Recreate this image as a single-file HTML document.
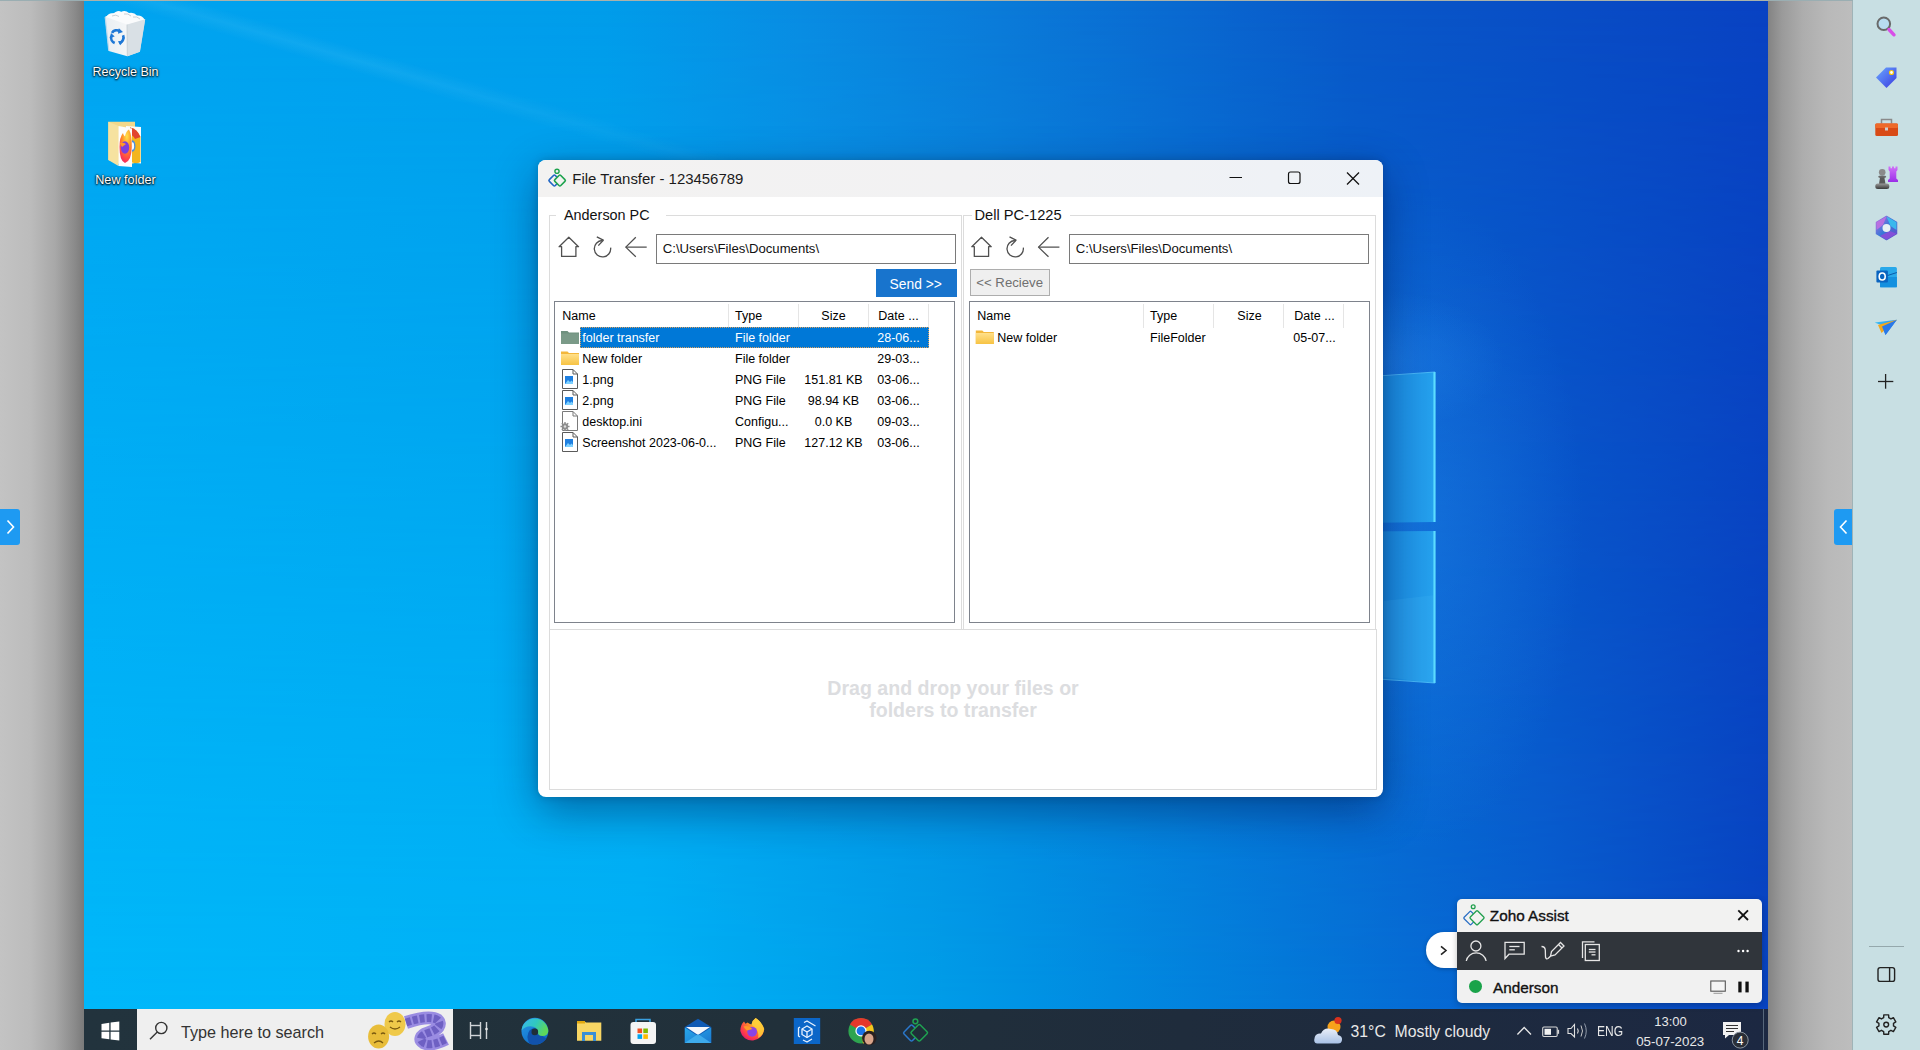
<!DOCTYPE html>
<html><head><meta charset="utf-8">
<style>
*{box-sizing:border-box;margin:0;padding:0}
html,body{width:1920px;height:1050px;overflow:hidden;background:#c0c0c0;font-family:"Liberation Sans",sans-serif}
.a{position:absolute}
.t{position:absolute;white-space:nowrap;line-height:1}
svg{position:absolute;overflow:visible}
#lgray{left:0;top:0;width:84px;height:1050px;background:linear-gradient(90deg,#c3c3c3 0px,#bcbcbc 30px,#a8a8a8 55px,#8a8a8a 75px,#7a7a7a 84px)}
#rgray{left:1768px;top:0;width:85px;height:1050px;background:linear-gradient(90deg,#838383 0px,#9a9a9a 14px,#adadad 35px,#b9b9b9 60px,#bdbdbd 84px)}
#sidebar{left:1852px;top:0;width:68px;height:1050px;background:#c8dfe3;border-left:1px solid #9fb3b7}
#topline{left:0;top:0;width:1853px;height:1px;background:linear-gradient(90deg,#9aaeb2 0px,#9aaeb2 84px,#aab2aa 84px,#aab2aa 1768px,#9aaeb2 1768px)}
#desk{left:84px;top:1px;width:1684px;height:1008px;overflow:hidden;background:linear-gradient(90deg,#00b8fa 0px,#00b2f6 560px,#009ce8 860px,#047ada 1200px,#0860d0 1450px,#0844c2 1684px)}
#desktop2{left:0;top:0;width:1684px;height:1008px;background:linear-gradient(90deg,#00a4f0 0px,#009cea 520px,#088ce2 716px,#0a7ad8 916px,#0858c8 1266px,#0842c2 1684px);-webkit-mask-image:linear-gradient(to bottom,#000 0px,rgba(0,0,0,0) 1008px)}
#taskbar{left:84px;top:1009px;width:1684px;height:41px;background:linear-gradient(90deg,#22333d 0px,#21303a 700px,#1f2c3c 1100px,#1c2842 1684px)}
#ltab{left:0;top:509px;width:20px;height:36px;background:#1e9af2;border-radius:0 3px 3px 0}
#rtab{left:1834px;top:509px;width:18px;height:36px;background:#1e9af2;border-radius:3px 0 0 3px}
#win{left:538px;top:160px;width:845px;height:637px;background:#fff;border-radius:8px;box-shadow:0 14px 44px rgba(0,20,70,.45),0 0 8px rgba(0,0,0,.18);overflow:hidden}
#title{left:0;top:0;width:845px;height:37px;background:linear-gradient(90deg,#f3f2f1 0%,#f2f2f3 50%,#eef2f7 100%)}
.gb{position:absolute;border:1px solid #dcdcdc}
.lb{position:absolute;border:1px solid #7e838c;background:#fff}
.lt{position:absolute;white-space:nowrap;line-height:1;font-size:12.5px;color:#000}
.ico{stroke:#444;fill:none;stroke-width:1.4}
.desklabel{position:absolute;white-space:nowrap;line-height:1;font-size:13px;color:#fff;text-shadow:0 0 1.5px rgba(0,0,0,.9),0 1px 2px #000,0 0 3px rgba(0,0,0,.5);text-align:center}
</style></head><body>
<div id="lgray" class="a"></div>
<div id="desk" class="a"><div id="desktop2" class="a"></div>
<!-- light streaks -->
<div class="a" style="left:0;top:0;width:1684px;height:1008px;background:linear-gradient(16deg,rgba(255,255,255,0) 975px,rgba(170,235,255,.09) 987px,rgba(255,255,255,0) 999px);-webkit-mask-image:linear-gradient(90deg,#000 0px,#000 300px,rgba(0,0,0,0) 760px)"></div>
<!-- window logo (visible part right of window) -->
<svg style="left:0;top:0" width="1684" height="1008">
 <defs>
  <linearGradient id="wl" x1="0" y1="0" x2="1" y2="0"><stop offset="0" stop-color="#1478d8"/><stop offset=".7" stop-color="#1a8ce2"/><stop offset="1" stop-color="#26a2ee"/></linearGradient>
  <radialGradient id="glow" cx="0.5" cy="0.5" r="0.5"><stop offset="0" stop-color="#2a8ef0" stop-opacity=".35"/><stop offset="1" stop-color="#2a8ef0" stop-opacity="0"/></radialGradient>
 </defs>
 <ellipse cx="1330" cy="520" rx="170" ry="330" fill="url(#glow)"/>
 <ellipse cx="1300" cy="360" rx="120" ry="70" fill="url(#glow)"/>
 <polygon points="1200,384 1351,371 1351,521 1200,523" fill="url(#wl)"/>
 <polygon points="1200,531 1351,530 1351,682 1200,670" fill="url(#wl)"/>
 <line x1="1350.5" y1="371" x2="1350.5" y2="521" stroke="#5cdcff" stroke-width="2.2"/>
 <line x1="1350.5" y1="530" x2="1350.5" y2="682" stroke="#5cdcff" stroke-width="2.2"/>
 <line x1="1280" y1="376" x2="1351" y2="371" stroke="#5ccfff" stroke-width="1.2" opacity=".7"/>
 <line x1="1280" y1="677" x2="1351" y2="682" stroke="#5ccfff" stroke-width="1.2" opacity=".7"/>
 <polygon points="1300,600 1351,594 1351,682 1300,676" fill="#5ad0ff" opacity=".12"/>
</svg>
<!-- recycle bin -->
<svg style="left:16px;top:4px" width="60" height="60" viewBox="0 0 60 60">
 <defs><linearGradient id="bin" x1="0" y1="0" x2="1" y2="0"><stop offset="0" stop-color="#e8eef2"/><stop offset=".55" stop-color="#f4f6f8"/><stop offset="1" stop-color="#c9d3d9"/></linearGradient></defs>
 <polygon points="5,11.7 18.6,6 45.2,14.3 39.9,46.7 27.3,51.3 8.7,45.9" fill="url(#bin)"/>
 <polygon points="27,19 45.2,14.3 39.9,46.7 27.3,51.3" fill="#d9e0e5"/>
 <path d="M6,12 Q9,7 14,8.5 Q17,5 21,7 Q25,4.5 29,8 Q34,7 37,10.5 Q42,10 44.5,14.5 L27,19.5 Z" fill="#fafbfc"/>
 <path d="M12,11 Q16,9 19,11.5 M24,9 Q28,8 31,11 M33,12 Q37,11 40,14" stroke="#c8d0d6" stroke-width="1" fill="none"/>
 <line x1="5.2" y1="12" x2="8.8" y2="45.8" stroke="#b8d8ec" stroke-width="1.2"/>
 <line x1="27" y1="19.5" x2="27.3" y2="51" stroke="#c2ccd2" stroke-width=".8"/>
 <g stroke="#1f78d6" stroke-width="2.9" fill="none" transform="translate(17 32.5) scale(.92) translate(-17 -32.5)">
 <path d="M11.5,27.5 A6.3,6.3 0 0 1 20,25.5"/>
 <path d="M23.6,30 A6.3,6.3 0 0 1 19.5,38.5"/>
 <path d="M14.5,38.5 A6.3,6.3 0 0 1 10.8,31"/>
 </g>
 <g fill="#1f78d6" transform="translate(17 32.5) scale(.92) translate(-17 -32.5)"><polygon points="19,22.5 23.5,26.5 18,28.5"/><polygon points="24.5,36 20.5,41 18,36.5"/><polygon points="9,33 10.5,27.5 14.5,31.5"/></g>
</svg>
<div class="desklabel" style="left:8.5px;top:65.2px;width:66px;font-size:12.5px">Recycle Bin</div>
<!-- new folder -->
<svg style="left:16px;top:112px" width="60" height="60" viewBox="0 0 60 60">
 <defs><radialGradient id="nff" cx=".6" cy=".2" r=".9"><stop offset="0" stop-color="#ffe14a"/><stop offset=".45" stop-color="#ff8a24"/><stop offset=".8" stop-color="#ff3b4e"/><stop offset="1" stop-color="#e0206a"/></radialGradient></defs>
 <polygon points="8.3,8.7 35,8.7 35,50 24,52.8 8.3,47" fill="#f3d88a"/>
 <polygon points="26,13 41,14 41,50.5 26,49" fill="#fbfbfb"/>
 <path d="M30,14.5 A14,18 0 0 1 40.5,24 L40.5,49 A12,16 0 0 1 30,48 Z" fill="#f3b51e"/>
 <path d="M30,14.5 A14,18 0 0 1 40.5,24 L35,26 Q33,22 30,21.5 Z" fill="#e2432f"/>
 <ellipse cx="32.5" cy="33" rx="3" ry="5.8" fill="#4b8fdc"/>
 <ellipse cx="32.5" cy="33" rx="1.6" ry="3.8" fill="#fbfbfb"/>
 <polygon points="8.3,8.7 18.5,13 18.5,53 8.3,47" fill="#f6e2a0"/>
 <polygon points="18.5,13 32,15.5 32,54 18.5,53" fill="#fdfdfd"/>
 <path d="M19.5,34 Q19.5,24 23,20 Q23.5,23 25,23.5 Q26,18 29,16.5 Q32,22 31.8,34 Q31.5,48 25,50 Q19.5,48 19.5,34 Z" fill="url(#nff)"/>
 <ellipse cx="25" cy="34.5" rx="4.2" ry="6.2" fill="#7b3fdc"/>
 <path d="M19.8,30 Q23,29 26,31 L22,34 Z" fill="#ff9a28"/>
</svg>
<div class="desklabel" style="left:8.5px;top:173.4px;width:66px;font-size:12.7px">New folder</div>
</div>
<div id="rgray" class="a"></div>
<div id="sidebar" class="a"></div>
<div id="topline" class="a"></div>
<div id="ltab" class="a"><svg style="left:6px;top:10px" width="9" height="16"><polyline points="1.5,1.5 7.5,8 1.5,14.5" stroke="#fff" stroke-width="1.6" fill="none"/></svg></div>
<div id="rtab" class="a"><svg style="left:5px;top:10px" width="9" height="16"><polyline points="7.5,1.5 1.5,8 7.5,14.5" stroke="#fff" stroke-width="1.6" fill="none"/></svg></div>
<div id="win" class="a">
 <div id="title" class="a"></div>
 <div class="t" style="left:34.3px;top:12.1px;font-size:14.95px;color:#1b1b1b">File Transfer - 123456789</div>
 <!-- group boxes -->
 <div class="gb" style="left:11px;top:55px;width:413px;height:415px"></div>
 <div class="gb" style="left:425px;top:55px;width:413px;height:415px"></div>
 <div class="a" style="left:18px;top:50px;width:110px;height:12px;background:#fff"></div>
 <div class="a" style="left:434px;top:50px;width:98px;height:12px;background:#fff"></div>
 <div class="t" style="left:26px;top:47.6px;font-size:14.4px;color:#111">Anderson PC</div>
 <div class="t" style="left:436.5px;top:47.6px;font-size:14.65px;color:#111">Dell PC-1225</div>
 <!-- address boxes -->
 <div class="a" style="left:118px;top:74px;width:300px;height:30px;border:1px solid #7a7a7a;background:#fff"></div>
 <div class="t" style="left:124.8px;top:82px;font-size:13.15px;color:#111">C:\Users\Files\Documents\</div>
 <div class="a" style="left:531px;top:74px;width:300px;height:30px;border:1px solid #7a7a7a;background:#fff"></div>
 <div class="t" style="left:537.8px;top:82px;font-size:13.15px;color:#111">C:\Users\Files\Documents\</div>
 <!-- buttons -->
 <div class="a" style="left:338px;top:109px;width:81px;height:28px;background:#1874cd"></div>
 <div class="t" style="left:351.6px;top:117.6px;font-size:13.8px;color:#fff">Send &gt;&gt;</div>
 <div class="a" style="left:432px;top:109px;width:80px;height:27px;background:#efefef;border:1px solid #adadad"></div>
 <div class="t" style="left:438.3px;top:115.8px;font-size:13.2px;color:#707070">&lt;&lt; Recieve</div>
 <!-- list boxes -->
 <div class="lb" style="left:16px;top:141px;width:401px;height:322px">
  <div class="a" style="left:173px;top:2px;width:1px;height:24px;background:#e5e5e5"></div>
  <div class="a" style="left:243px;top:2px;width:1px;height:24px;background:#e5e5e5"></div>
  <div class="a" style="left:313px;top:2px;width:1px;height:24px;background:#e5e5e5"></div>
  <div class="a" style="left:373px;top:2px;width:1px;height:24px;background:#e5e5e5"></div>
  <div class="lt" style="left:7.3px;top:7.8px">Name</div>
  <div class="lt" style="left:180px;top:7.8px">Type</div>
  <div class="lt" style="left:243.5px;top:7.8px;width:70px;text-align:center">Size</div>
  <div class="lt" style="left:313.5px;top:7.8px;width:60px;text-align:center">Date ...</div>
  <div class="a" style="left:25px;top:25px;width:349px;height:21px;background:#0078d7;border:1px dotted #d9a060"></div>
  <div class="lt" style="left:27.3px;top:29.5px;color:#fff">folder transfer</div>
  <div class="lt" style="left:180px;top:29.5px;color:#fff">File folder</div>
  <div class="lt" style="left:313.5px;top:29.5px;width:60px;text-align:center;color:#fff">28-06...</div>
  <div class="lt" style="left:27.3px;top:50.5px">New folder</div>
  <div class="lt" style="left:180px;top:50.5px">File folder</div>
  <div class="lt" style="left:313.5px;top:50.5px;width:60px;text-align:center">29-03...</div>
  <div class="lt" style="left:27.3px;top:71.5px">1.png</div>
  <div class="lt" style="left:180px;top:71.5px">PNG File</div>
  <div class="lt" style="left:243.5px;top:71.5px;width:70px;text-align:center">151.81 KB</div>
  <div class="lt" style="left:313.5px;top:71.5px;width:60px;text-align:center">03-06...</div>
  <div class="lt" style="left:27.3px;top:92.5px">2.png</div>
  <div class="lt" style="left:180px;top:92.5px">PNG File</div>
  <div class="lt" style="left:243.5px;top:92.5px;width:70px;text-align:center">98.94 KB</div>
  <div class="lt" style="left:313.5px;top:92.5px;width:60px;text-align:center">03-06...</div>
  <div class="lt" style="left:27.3px;top:113.5px">desktop.ini</div>
  <div class="lt" style="left:180px;top:113.5px">Configu...</div>
  <div class="lt" style="left:243.5px;top:113.5px;width:70px;text-align:center">0.0 KB</div>
  <div class="lt" style="left:313.5px;top:113.5px;width:60px;text-align:center">09-03...</div>
  <div class="lt" style="left:27.3px;top:134.5px">Screenshot 2023-06-0...</div>
  <div class="lt" style="left:180px;top:134.5px">PNG File</div>
  <div class="lt" style="left:243.5px;top:134.5px;width:70px;text-align:center">127.12 KB</div>
  <div class="lt" style="left:313.5px;top:134.5px;width:60px;text-align:center">03-06...</div>
 </div>
 <div class="lb" style="left:431px;top:141px;width:401px;height:322px">
  <div class="a" style="left:173px;top:2px;width:1px;height:24px;background:#e5e5e5"></div>
  <div class="a" style="left:243px;top:2px;width:1px;height:24px;background:#e5e5e5"></div>
  <div class="a" style="left:313px;top:2px;width:1px;height:24px;background:#e5e5e5"></div>
  <div class="a" style="left:373px;top:2px;width:1px;height:24px;background:#e5e5e5"></div>
  <div class="lt" style="left:7.3px;top:7.8px">Name</div>
  <div class="lt" style="left:180px;top:7.8px">Type</div>
  <div class="lt" style="left:244.5px;top:7.8px;width:70px;text-align:center">Size</div>
  <div class="lt" style="left:314.5px;top:7.8px;width:60px;text-align:center">Date ...</div>
  <div class="lt" style="left:27.3px;top:29.5px">New folder</div>
  <div class="lt" style="left:180px;top:29.5px">FileFolder</div>
  <div class="lt" style="left:314.5px;top:29.5px;width:60px;text-align:center">05-07...</div>
 </div>
 <!-- drop area -->
 <div class="a" style="left:11px;top:469px;width:828px;height:161px;border:1px solid #dcdcdc"></div>
 <div class="t" style="left:215px;top:519.0px;width:400px;text-align:center;font-size:19.6px;font-weight:700;color:#dcdde0">Drag and drop your files or</div>
 <div class="t" style="left:215px;top:540.9px;width:400px;text-align:center;font-size:19.6px;font-weight:700;color:#dcdde0">folders to transfer</div>
 <!-- line icons -->
 <svg style="left:0;top:0" width="845" height="637" viewBox="538 160 845 637">
  <defs>
   <linearGradient id="fy" x1="0" y1="0" x2="0" y2="1"><stop offset="0" stop-color="#ffe08a"/><stop offset="1" stop-color="#f7c343"/></linearGradient>
  </defs>
  <!-- zoho logo -->
  <g fill="none" stroke-width="1.6">
   <rect x="550.2" y="176.3" width="8.4" height="8.4" rx="1.3" transform="rotate(45 554.4 180.5)" stroke="#2166c4"/>
   <rect x="555.7" y="176.3" width="8.4" height="8.4" rx="1.3" transform="rotate(45 559.9 180.5)" stroke="#1ea34e" fill="#f3f2f1"/>
   <circle cx="557" cy="171.3" r="2.1" stroke="#1ea34e" stroke-width="1.4"/>
  </g>
  <!-- window controls -->
  <g stroke="#111" stroke-width="1.2" fill="none">
   <line x1="1229.5" y1="177.5" x2="1242" y2="177.5"/>
   <rect x="1288.5" y="172" width="11.5" height="11.5" rx="2"/>
   <line x1="1347" y1="172.5" x2="1359" y2="184.5"/>
   <line x1="1359" y1="172.5" x2="1347" y2="184.5"/>
  </g>
  <!-- toolbar icons left -->
  <g stroke="#505050" stroke-width="1.3" fill="none" stroke-linejoin="round">
   <path d="M561.6,256.4 L561.6,246.7 L559.1,246.7 L568.8,237.2 L578.5,246.7 L575.9,246.7 L575.9,256.4 Z"/>
   <path d="M602.21,240.50 A8.2,8.2 0 1 0 610.62,247.56"/>
   <polyline points="596.8,236.8 603.3,240.2 598.3,245.6"/>
   <polyline points="635.8,237.2 625.8,247.1 635.8,256.8"/>
   <line x1="625.8" y1="247.1" x2="646.7" y2="247.1"/>
  </g>
  <g stroke="#505050" stroke-width="1.3" fill="none" stroke-linejoin="round" transform="translate(412.7,0)">
   <path d="M561.6,256.4 L561.6,246.7 L559.1,246.7 L568.8,237.2 L578.5,246.7 L575.9,246.7 L575.9,256.4 Z"/>
   <path d="M602.21,240.50 A8.2,8.2 0 1 0 610.62,247.56"/>
   <polyline points="596.8,236.8 603.3,240.2 598.3,245.6"/>
   <polyline points="635.8,237.2 625.8,247.1 635.8,256.8"/>
   <line x1="625.8" y1="247.1" x2="646.7" y2="247.1"/>
  </g>
  <!-- file icons -->
  <g id="fold-sel">
   <path d="M561,331 L567.5,331 L569,332.5 L579,332.5 L579,344 L561,344 Z" fill="#6f917f"/>
   <rect x="561" y="333.5" width="18" height="10.5" fill="#7a9a88"/>
  </g>
  <g>
   <path d="M561,351.5 L567.5,351.5 L569,353 L579,353 L579,365 L561,365 Z" fill="#f3b73b"/>
   <rect x="561" y="354" width="18" height="11" fill="url(#fy)"/>
  </g>
  <g transform="translate(414.8,-21)">
   <path d="M561,351.5 L567.5,351.5 L569,353 L579,353 L579,365 L561,365 Z" fill="#f3b73b"/>
   <rect x="561" y="354" width="18" height="11" fill="url(#fy)"/>
  </g>
  <g id="png1">
   <path d="M562.5,369.5 L573,369.5 L577.5,374 L577.5,388.5 L562.5,388.5 Z" fill="#fff" stroke="#5a5a5a" stroke-width="1"/>
   <polyline points="573,369.5 573,374 577.5,374" fill="none" stroke="#5a5a5a" stroke-width="1"/>
   <rect x="565" y="376" width="8" height="8" fill="#1e7fe0"/>
   <path d="M565,384 L568,380 L570,382 L571.5,380.5 L573,382 L573,384 Z" fill="#7cd0ff"/>
  </g>
  <use href="#png1" transform="translate(0,21)"/>
  <g>
   <path d="M562.5,411.5 L573,411.5 L577.5,416 L577.5,430.5 L562.5,430.5 Z" fill="#fff" stroke="#7a7a7a" stroke-width="1"/>
   <polyline points="573,411.5 573,416 577.5,416" fill="none" stroke="#7a7a7a" stroke-width="1"/>
   <path d="M568.00,425.38 L568.13,425.83 L569.54,425.78 L569.54,427.22 L568.13,427.17 L567.91,427.83 L567.68,428.24 L568.72,429.20 L567.70,430.22 L566.74,429.18 L566.12,429.50 L565.67,429.63 L565.72,431.04 L564.28,431.04 L564.33,429.63 L563.67,429.41 L563.26,429.18 L562.30,430.22 L561.28,429.20 L562.32,428.24 L562.00,427.62 L561.87,427.17 L560.46,427.22 L560.46,425.78 L561.87,425.83 L562.09,425.17 L562.32,424.76 L561.28,423.80 L562.30,422.78 L563.26,423.82 L563.88,423.50 L564.33,423.37 L564.28,421.96 L565.72,421.96 L565.67,423.37 L566.33,423.59 L566.74,423.82 L567.70,422.78 L568.72,423.80 L567.68,424.76 Z" fill="#8d8d8d"/>
   <circle cx="565" cy="426.5" r="1.2" fill="#ddd"/>
  </g>
  <use href="#png1" transform="translate(0,63)"/>
 </svg>
</div>
<div id="taskbar" class="a">
 <div class="a" style="left:53px;top:0;width:316px;height:41px;background:#efefef"></div>
 <div class="t" style="left:97px;top:14.6px;font-size:16.2px;color:#333">Type here to search</div>
 <div class="t" style="left:1266.5px;top:14.6px;font-size:15.8px;color:#e8e8e8">31°C&nbsp; Mostly cloudy</div>
 <div class="t" style="left:1513.3px;top:15.3px;font-size:14.4px;color:#e8e8e8;transform:scaleX(.835);transform-origin:0 0">ENG</div>
 <div class="t" style="left:1570.2px;top:6.4px;font-size:13px;color:#e8e8e8">13:00</div>
 <div class="t" style="left:1552.2px;top:25.8px;font-size:13.3px;color:#e8e8e8">05-07-2023</div>
 <div class="a" style="left:1679px;top:0;width:1px;height:41px;background:#56667a"></div>
 <svg style="left:0;top:0" width="1684" height="41" viewBox="84 1009 1684 41">
  <defs>
   <linearGradient id="edgeg" x1="0" y1="0" x2=".6" y2="1"><stop offset="0" stop-color="#2a9ae6"/><stop offset="1" stop-color="#0c6cc8"/></linearGradient>
   <linearGradient id="edgeg2" x1="0" y1="0" x2="1" y2=".4"><stop offset="0" stop-color="#3ab8ee"/><stop offset=".55" stop-color="#30c8c0"/><stop offset="1" stop-color="#5ed85a"/></linearGradient>
   <linearGradient id="mailg" x1="0" y1="0" x2="1" y2="1"><stop offset="0" stop-color="#28a8ea"/><stop offset="1" stop-color="#1a78d0"/></linearGradient>
   <radialGradient id="ffg" cx=".75" cy=".15" r=".95"><stop offset="0" stop-color="#ffe04a"/><stop offset=".45" stop-color="#ff8a2a"/><stop offset=".8" stop-color="#ff3c4a"/><stop offset="1" stop-color="#e81a6a"/></radialGradient>
   <linearGradient id="cloudg" x1="0" y1="0" x2="0" y2="1"><stop offset="0" stop-color="#e9eef8"/><stop offset="1" stop-color="#a9c2e6"/></linearGradient>
  </defs>
  <!-- start -->
  <g fill="#fff">
   <polygon points="101.5,1024 109.3,1022.8 109.3,1030.5 101.5,1030.5"/>
   <polygon points="110.6,1022.6 119.3,1021.4 119.3,1030.5 110.6,1030.5"/>
   <polygon points="101.5,1031.8 109.3,1031.8 109.3,1039.3 101.5,1038.3"/>
   <polygon points="110.6,1031.8 119.3,1031.8 119.3,1040.6 110.6,1039.5"/>
  </g>
  <!-- search glass -->
  <g stroke="#333" stroke-width="1.4" fill="none">
   <circle cx="161.3" cy="1028" r="5.6"/>
   <line x1="157.3" y1="1032" x2="150" y2="1039.3"/>
  </g>
  <!-- masks + film -->
  <path d="M406,1022.5 C420,1018 432,1016.5 437.5,1020 C442,1024 438,1030 428,1033 C420,1035.5 419,1040 424,1043 C430,1046 438,1043 446,1039" stroke="#9a8ce2" stroke-width="13" fill="none"/>
  <path d="M406,1022.5 C420,1018 432,1016.5 437.5,1020 C442,1024 438,1030 428,1033 C420,1035.5 419,1040 424,1043 C430,1046 438,1043 446,1039" stroke="#5f52b8" stroke-width="8" stroke-dasharray="5 2" fill="none" opacity=".75"/>
  <ellipse cx="395" cy="1024" rx="10.5" ry="12" fill="#efc94a"/>
  <ellipse cx="378.6" cy="1036.5" rx="10.5" ry="12" fill="#e8bd3a"/>
  <g stroke="#7a5a10" stroke-width="1.3" fill="none">
   <path d="M389,1022 q2,-2 4,0"/><path d="M397,1022 q2,-2 4,0"/><path d="M390,1027 q5,4 10,0"/>
   <path d="M372,1034 q2,-2 4,0"/><path d="M381,1034 q2,-2 4,0"/><path d="M374,1043 q5,-4 9,0"/>
  </g>
  <!-- task view -->
  <g stroke="#d0d4d8" stroke-width="1.4" fill="none">
   <line x1="470.5" y1="1022" x2="470.5" y2="1039"/><line x1="480.5" y1="1022" x2="480.5" y2="1039"/>
   <line x1="470" y1="1025.5" x2="481" y2="1025.5"/><line x1="470" y1="1035.5" x2="481" y2="1035.5"/>
   <line x1="486.5" y1="1022" x2="486.5" y2="1039"/>
   <circle cx="486.5" cy="1029" r="1.3" fill="#e8e8e8" stroke="none"/>
  </g>
  <!-- edge -->
  <circle cx="534.9" cy="1031.2" r="13.4" fill="url(#edgeg)"/>
  <path d="M529.5,1044 Q525.5,1036 529.5,1030.5 Q534,1026.5 538.5,1030 Q540,1035.5 546.5,1038.5 Q542,1044.3 535,1044.6 Z" fill="#1152ac"/>
  <path d="M521.6,1030.5 A13.4,13.4 0 0 1 548.3,1031 Q548,1036 542.5,1036 Q537.5,1036 538,1032 Q537,1026.5 530.5,1026.3 Q524.5,1026.5 521.6,1030.5 Z" fill="url(#edgeg2)"/>
  <circle cx="534.8" cy="1031.9" r="3.3" fill="#1f2f38"/>
  <!-- explorer -->
  <path d="M577,1021 L584,1021 L586,1022.5 L601.3,1022.5 L601.3,1040.7 L577,1040.7 Z" fill="#f8d664"/>
  <rect x="577" y="1021" width="8" height="2.5" fill="#e1a80f"/>
  <path d="M582,1041 L582,1032 L596,1032 L596,1041 L593,1041 L593,1035 L585,1035 L585,1041 Z" fill="#3a8fd6"/>
  <!-- store -->
  <path d="M636,1022 L636,1019.5 L650,1019.5 L650,1022" stroke="#3aa0e0" stroke-width="1.5" fill="none"/>
  <rect x="630.5" y="1022" width="25.5" height="22" rx="3" fill="#f4f4f4"/>
  <rect x="637.5" y="1028.5" width="4.6" height="4.6" fill="#f25022"/><rect x="643.3" y="1028.5" width="4.6" height="4.6" fill="#7fba00"/>
  <rect x="637.5" y="1034.3" width="4.6" height="4.6" fill="#00a4ef"/><rect x="643.3" y="1034.3" width="4.6" height="4.6" fill="#ffb900"/>
  <!-- mail -->
  <polygon points="684.8,1027 698,1018.8 711.2,1027 711.2,1043 684.8,1043" fill="#0f5bb5"/>
  <polygon points="686,1027 710,1027 698,1035" fill="#f4f8fc"/>
  <polygon points="684.8,1027.5 698,1036 711.2,1027.5 711.2,1043 684.8,1043" fill="url(#mailg)"/>
  <polygon points="684.8,1043 698,1034 711.2,1043" fill="#46b4f0" opacity=".8"/>
  <!-- firefox -->
  <path d="M740.3,1031 Q740.5,1024.5 744,1021.6 L745.5,1023.8 L747.5,1022.5 Q749.5,1024 751.5,1024.5 Q752.5,1020 755.7,1018 Q761.5,1021.5 764.2,1029 A12.1,12.1 0 0 1 740.3,1031 Z" fill="url(#ffg)"/>
  <path d="M751.5,1024.5 Q752.5,1020 755.7,1018 Q761.5,1021.5 764.2,1029 Q763,1036 758,1038 Q760,1030 751.5,1024.5 Z" fill="#ffcf38" opacity=".85"/>
  <circle cx="752.1" cy="1031.8" r="4.9" fill="#8a44e6"/>
  <path d="M743.5,1026.5 Q748.5,1025 752.5,1029 L747,1030.5 Q745,1029 743.5,1026.5 Z" fill="#ff9a2a"/>
  <!-- blue cube app -->
  <rect x="793.8" y="1018" width="26.4" height="26" fill="#0b66c8"/>
  <g stroke="#e8f2ff" stroke-width="1.3" fill="none" stroke-linejoin="round">
   <path d="M807,1026 L812,1029 L812,1034.5 L807,1037.5 L802,1034.5 L802,1029 Z"/>
   <path d="M802,1029 L807,1032 L812,1029 M807,1032 L807,1037.5"/>
   <path d="M800,1027 L798.5,1028 L798.5,1036 L800,1037"/>
   <path d="M804,1022.5 L807,1021 L815.5,1026"/>
   <path d="M803,1040 L807,1042 L812,1039"/>
  </g>
  <!-- chrome -->
  <circle cx="861" cy="1030.9" r="12.6" fill="#2ea44f"/>
  <path d="M861,1030.9 L850,1024.5 A12.6,12.6 0 0 1 872,1024.5 Z" fill="#e6382b"/>
  <path d="M861,1030.9 L872,1024.5 A12.6,12.6 0 0 1 863,1043.4 Z" fill="#f7c51c"/>
  <circle cx="861" cy="1030.9" r="5.6" fill="#fff"/>
  <circle cx="861" cy="1030.9" r="4.4" fill="#1a73e8"/>
  <circle cx="869.3" cy="1038" r="7.3" fill="#2a2020"/>
  <ellipse cx="869" cy="1039" rx="4.5" ry="5.5" fill="#d9a48a"/>
  <!-- zoho -->
  <g fill="none" stroke-width="1.5">
   <rect x="905.5" y="1027" width="12" height="12" rx="1.5" transform="rotate(45 911.5 1033)" stroke="#2a78cc"/>
   <rect x="913" y="1026.5" width="12.5" height="12.5" rx="1.5" transform="rotate(45 919.25 1032.75)" stroke="#1fa352" fill="#1f2e38"/>
   <circle cx="915.4" cy="1021.3" r="2.4" stroke="#1fa352"/>
  </g>
  <!-- weather -->
  <circle cx="1334" cy="1027" r="6.5" fill="#f7a21b"/>
  <circle cx="1338" cy="1020.5" r="3.6" fill="#d8321e"/>
  <path d="M1317,1043.5 Q1313,1043 1314.8,1037 Q1316,1033 1321,1033.5 Q1324,1027 1331,1029 Q1337,1029 1338,1035 Q1342.5,1036 1342,1040 Q1341.5,1043.5 1338,1043.5 Z" fill="url(#cloudg)"/>
  <!-- tray -->
  <polyline points="1517.4,1034.5 1524.2,1027.5 1531,1034.5" stroke="#e8e8e8" stroke-width="1.3" fill="none"/>
  <rect x="1542.7" y="1027" width="14.5" height="9.5" rx="1.2" stroke="#d8d8d8" stroke-width="1.1" fill="none"/>
  <rect x="1544.5" y="1028.8" width="6.5" height="6" fill="#f0f0f0"/>
  <rect x="1557.5" y="1029.8" width="1.6" height="4" fill="#d8d8d8"/>
  <path d="M1568,1028.5 L1571,1028.5 L1574.5,1024.5 L1574.5,1037 L1571,1033.5 L1568,1033.5 Z" stroke="#e0e0e0" stroke-width="1.1" fill="none"/>
  <path d="M1577.5,1028.5 Q1579,1031 1577.5,1033.5" stroke="#e0e0e0" stroke-width="1.1" fill="none"/>
  <path d="M1581,1025.5 Q1584,1031 1581,1036.5" stroke="#c8c8c8" stroke-width="1" fill="none"/>
  <path d="M1584.5,1023.5 Q1588,1031 1584.5,1038.5" stroke="#909aa8" stroke-width="1" fill="none"/>
  <!-- notifications -->
  <path d="M1723,1022 L1741,1022 L1741,1035 L1729,1035 L1725,1038.5 L1725,1035 L1723,1035 Z" fill="#f2f2f2"/>
  <g stroke="#333" stroke-width="1"><line x1="1726" y1="1025.5" x2="1738" y2="1025.5"/><line x1="1726" y1="1028.5" x2="1738" y2="1028.5"/><line x1="1726" y1="1031.5" x2="1734" y2="1031.5"/></g>
  <circle cx="1740.2" cy="1040.1" r="8" fill="#2a2f38" stroke="#8a94a0" stroke-width="1"/>
  <text x="1740.2" y="1044.6" font-family="Liberation Sans" font-size="12" fill="#fff" text-anchor="middle">4</text>
 </svg>
</div>
<div class="a" style="left:1426px;top:931.5px;width:40px;height:36px;background:#fff;border-radius:18px 0 0 18px;box-shadow:0 1px 4px rgba(0,0,0,.25)"></div>
<div class="a" style="left:1457px;top:899px;width:305px;height:103.5px;border-radius:5px;overflow:hidden;box-shadow:0 2px 6px rgba(0,0,0,.25)">
 <div class="a" style="left:0;top:0;width:305px;height:32.5px;background:#f2f2f1"></div>
 <div class="a" style="left:0;top:32.5px;width:305px;height:38px;background:#30353b"></div>
 <div class="a" style="left:0;top:70.5px;width:305px;height:33px;background:#f1f1f1"></div>
</div>
<div class="t" style="left:1489.8px;top:907.6px;font-size:15.3px;color:#111;-webkit-text-stroke:0.35px #111">Zoho Assist</div>
<div class="t" style="left:1493px;top:979.7px;font-size:15.3px;color:#111;-webkit-text-stroke:0.35px #111">Anderson</div>
<svg style="left:0;top:0" width="1920" height="1050">
 <polyline points="1441,946.3 1446,950.5 1441,954.7" stroke="#222" stroke-width="1.6" fill="none"/>
 <g fill="none" stroke-width="1.3">
  <rect x="1465.5" y="913" width="10" height="10" rx="1" transform="rotate(45 1470.5 918)" stroke="#2a6fc4"/>
  <rect x="1471.8" y="912.5" width="10.5" height="10.5" rx="1" transform="rotate(45 1477 917.75)" stroke="#22a04e" fill="#f2f2f1"/>
  <circle cx="1473.2" cy="906.8" r="1.9" stroke="#22a04e"/>
 </g>
 <g stroke="#111" stroke-width="1.8"><line x1="1738.3" y1="910.3" x2="1748" y2="920"/><line x1="1748" y1="910.3" x2="1738.3" y2="920"/></g>
 <g stroke="#e6e6e6" stroke-width="1.3" fill="none">
  <circle cx="1475.9" cy="946" r="5"/>
  <path d="M1466.3,961 A10,9.5 0 0 1 1486.1,961"/>
  <path d="M1505,954.2 L1505,942.3 L1524.2,942.3 L1524.2,954.2 L1509,954.2 L1505,958.5 Z"/>
  <line x1="1509.3" y1="946.5" x2="1519.5" y2="946.5"/>
  <line x1="1509.3" y1="949.8" x2="1514.8" y2="949.8"/>
  <path d="M1550.5,956.2 L1551.5,951.5 L1560.5,942.5 L1564,946 L1555,955 Z"/>
  <line x1="1558.5" y1="944.5" x2="1562" y2="948"/>
  <path d="M1541.5,946.5 Q1545,946.5 1545.3,950 L1545.5,957 Q1546,959.5 1548,958.5 L1550.5,956.2"/>
  <path d="M1582.5,958 L1582.5,941.8 L1594.5,941.8"/>
  <rect x="1585.3" y="944.5" width="14" height="16"/>
  <line x1="1588.8" y1="949.5" x2="1595.5" y2="949.5"/>
  <line x1="1588.8" y1="952" x2="1595.5" y2="952"/>
  <line x1="1591.5" y1="954.8" x2="1595.5" y2="954.8"/>
 </g>
 <g fill="#fff"><circle cx="1738.5" cy="951" r="1.2"/><circle cx="1743.1" cy="951" r="1.2"/><circle cx="1747.6" cy="951" r="1.2"/></g>
 <circle cx="1475.5" cy="986.4" r="6.5" fill="#1aa34a"/>
 <rect x="1710.8" y="981" width="14.5" height="10.2" stroke="#555" stroke-width="1.1" fill="#f4f4f4"/>
 <line x1="1713.5" y1="993.3" x2="1722.5" y2="993.3" stroke="#999" stroke-width="1"/>
 <rect x="1738.3" y="981.6" width="3.3" height="10.8" fill="#111"/>
 <rect x="1745.4" y="981.6" width="3.3" height="10.8" fill="#111"/>
</svg>
<svg style="left:0;top:0" width="1920" height="1050">
 <defs>
  <linearGradient id="tagg" x1="0" y1="0" x2="1" y2="1"><stop offset="0" stop-color="#6aa8ff"/><stop offset="1" stop-color="#3a3ae0"/></linearGradient>
  <linearGradient id="m365" x1="0" y1="0" x2="1" y2="1"><stop offset="0" stop-color="#b46ee0"/><stop offset=".5" stop-color="#3a78d8"/><stop offset="1" stop-color="#6a48c8"/></linearGradient>
  <linearGradient id="planeg" x1="0" y1="0" x2="1" y2="1"><stop offset="0" stop-color="#3ac8f8"/><stop offset="1" stop-color="#2468e0"/></linearGradient>
 </defs>
 <!-- search -->
 <circle cx="1883.8" cy="23.8" r="6.3" fill="#b7dcf0" stroke="#6a6a6a" stroke-width="2"/>
 <line x1="1889" y1="29.5" x2="1894" y2="34.8" stroke="#d84ee8" stroke-width="3.4" stroke-linecap="round"/>
 <!-- tag -->
 <path d="M1876,77.5 L1886,67.5 L1896.5,67.5 L1896.5,78 L1886.5,88 Z" fill="url(#tagg)" stroke-linejoin="round"/>
 <circle cx="1891.5" cy="72.5" r="2" fill="#fff" stroke="#f4c20d" stroke-width="1.2"/>
 <!-- toolbox -->
 <path d="M1881.5,123.5 L1881.5,119.5 L1891.5,119.5 L1891.5,123.5" stroke="#8a8a8a" stroke-width="1.5" fill="none"/>
 <rect x="1875.3" y="123.5" width="22.7" height="12.5" rx="1.5" fill="#d84a16"/>
 <rect x="1875.3" y="123.5" width="22.7" height="4.5" rx="1" fill="#ee6a2a"/>
 <rect x="1885" y="127.5" width="3" height="3" fill="#cfcfcf"/>
 <!-- chess -->
 <defs><linearGradient id="rookg" x1="0" y1="0" x2="0" y2="1"><stop offset="0" stop-color="#d070f8"/><stop offset="1" stop-color="#9a2ee8"/></linearGradient>
 <linearGradient id="pawng" x1="0" y1="0" x2="0" y2="1"><stop offset="0" stop-color="#9a9a9a"/><stop offset="1" stop-color="#3a3a3a"/></linearGradient></defs>
 <path d="M1888.5,166.5 L1890.5,166.5 L1890.5,168.2 L1892,168.2 L1892,166.5 L1894,166.5 L1894,168.2 L1895.5,168.2 L1895.5,166.5 L1897.5,166.5 L1897.5,170 L1896.3,171.5 L1896.3,178.5 L1898,180 L1898,182 L1888,182 L1888,180 L1889.7,178.5 L1889.7,171.5 L1888.5,170 Z" fill="url(#rookg)"/>
 <circle cx="1882.2" cy="172.3" r="3.3" fill="#8a8a8a"/>
 <ellipse cx="1882.2" cy="176.8" rx="4" ry="1.3" fill="#6a6a6a"/>
 <path d="M1880,177.5 L1884.4,177.5 L1885.5,184 L1879,184 Z" fill="#5a5a5a"/>
 <rect x="1875.3" y="183.5" width="14" height="5.5" rx="2.5" fill="url(#pawng)"/>
 <!-- m365 -->
 <path d="M1886.5,216.5 L1896.5,222.3 L1896.5,233.7 L1886.5,239.5 L1876.5,233.7 L1876.5,222.3 Z" fill="url(#m365)" stroke="url(#m365)" stroke-width="1.5" stroke-linejoin="round"/>
 <path d="M1886.5,216.5 L1896.5,222.3 L1896.5,230 L1890.5,226 Z" fill="#38c0f0" opacity=".9"/>
 <path d="M1876.5,222.3 L1886.5,216.5 L1883,225 L1876.5,230 Z" fill="#c070e0" opacity=".9"/>
 <path d="M1880,236 L1886.5,239.5 L1896.5,233.7 L1890,231 Z" fill="#8a4ed8" opacity=".9"/>
 <circle cx="1886.5" cy="228" r="4" fill="#e8f0f4"/>
 <!-- outlook -->
 <rect x="1880" y="267" width="16.9" height="20.3" rx="1.5" fill="#28a8ea"/>
 <path d="M1880,277 L1896.9,277 L1896.9,287.3 L1880,287.3 Z" fill="#1490df"/>
 <path d="M1883,277 L1896.9,272.5" stroke="#0a5aa8" stroke-width="1" fill="none"/>
 <rect x="1876.4" y="270.5" width="11.5" height="12" rx="1" fill="#0a64c0"/>
 <ellipse cx="1882.2" cy="276.5" rx="3" ry="3.5" fill="none" stroke="#fff" stroke-width="1.6"/>
 <!-- plane -->
 <path d="M1874.7,322.5 L1896.9,319.7 L1885.5,335 L1882,325.5 Z" fill="url(#planeg)"/>
 <path d="M1878,325 L1896.9,319.7 L1881.5,333 Z" fill="#f4a81c"/>
 <path d="M1882,326.5 L1896.9,319.7 L1885.5,335 Z" fill="#2a78e8"/>
 <!-- plus -->
 <g stroke="#222" stroke-width="1.3"><line x1="1878" y1="381.5" x2="1893.3" y2="381.5"/><line x1="1885.6" y1="374" x2="1885.6" y2="388.7"/></g>
 <!-- separator -->
 <line x1="1869" y1="946.5" x2="1904" y2="946.5" stroke="#95a8ac" stroke-width="1"/>
 <!-- panel -->
 <rect x="1878" y="967.6" width="16.6" height="13.8" rx="2.2" stroke="#222" stroke-width="1.4" fill="none"/>
 <line x1="1889.6" y1="967.6" x2="1889.6" y2="981.4" stroke="#222" stroke-width="1.4"/>
 <!-- gear -->
 <path id="gear" fill="none" stroke="#222" stroke-width="1.4" stroke-linejoin="round" d="M1883.67,1017.65 L1883.78,1014.90 L1888.62,1014.90 L1888.73,1017.65 L1890.96,1018.93 L1893.39,1017.65 L1895.81,1021.84 L1893.49,1023.32 L1893.49,1025.88 L1895.81,1027.36 L1893.39,1031.55 L1890.96,1030.27 L1888.73,1031.55 L1888.62,1034.30 L1883.78,1034.30 L1883.67,1031.55 L1881.44,1030.27 L1879.01,1031.55 L1876.59,1027.36 L1878.91,1025.88 L1878.91,1023.32 L1876.59,1021.84 L1879.01,1017.65 L1881.44,1018.93 Z"/>
 <circle cx="1886.2" cy="1024.6" r="2.4" fill="none" stroke="#222" stroke-width="1.4"/>
</svg>
</body></html>
